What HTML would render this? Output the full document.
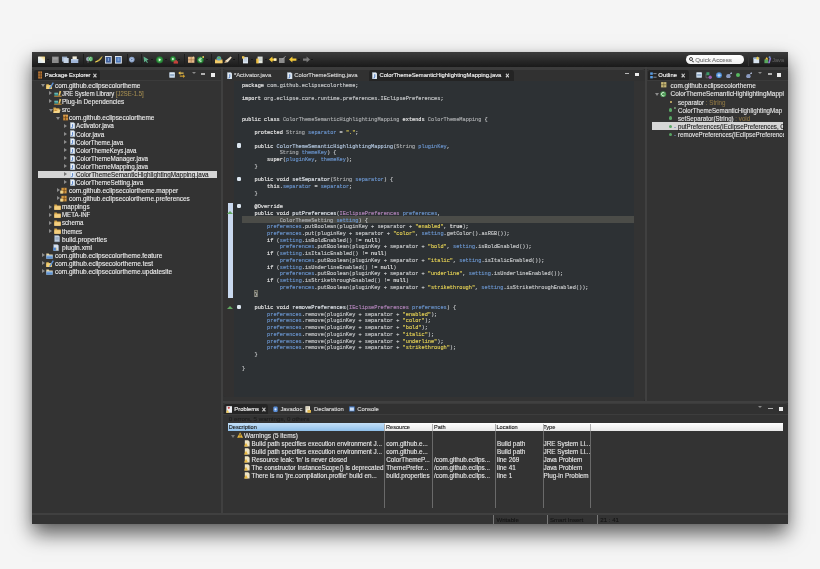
<!DOCTYPE html><html><head><meta charset="utf-8"><style>
*{margin:0;padding:0;box-sizing:border-box}
html,body{width:820px;height:569px;overflow:hidden;background:#f5f5f5}
body{position:relative;font-family:"Liberation Sans",sans-serif}
.a{position:absolute}
.t{position:absolute;white-space:pre;line-height:1;-webkit-text-stroke:0.12px currentColor}
.m{font-family:"Liberation Mono",monospace}

.cd{position:absolute;white-space:pre;font-family:"Liberation Mono",monospace;line-height:1;color:#c6c8ca;-webkit-text-stroke:0.14px currentColor;transform:scaleY(1.15);transform-origin:0 75%}
.cd .k{color:#e4e4e4;-webkit-text-stroke:0.16px currentColor}
.cd .f{color:#6a94cc}
.cd .s{color:#e2cf55}
.cd .ty{color:#a9abad}
.cd .p{color:#b184b9}
.cd .mth{color:#dde2e8}
.cd .ctor{color:#b0c4dc}
.cd .ann{color:#e4e4e4;-webkit-text-stroke:0.16px currentColor}
</style></head><body><div id="root" class="a" style="left:0;top:0;width:820px;height:569px;filter:blur(0.5px)"><div class="a" style="left:32.40px;top:52.40px;width:755.6px;height:472px;background:#333333;box-shadow:0 10px 19px rgba(0,0,0,0.62),0 0 5px rgba(0,0,0,0.1)"></div>
<div class="a" style="left:32.40px;top:52.40px;width:755.6px;height:14.2px;background:linear-gradient(#3b3b3b,#1a1a1a)"></div>
<div class="a" style="left:32.40px;top:66.60px;width:755.6px;height:2.4px;background:#3c3c3c"></div>
<div class="a" style="left:220.50px;top:69.00px;width:0.6px;height:444px;background:#2c2c2c"></div>
<div class="a" style="left:221.10px;top:66.60px;width:2.2px;height:447px;background:#404040"></div>
<div class="a" style="left:644.00px;top:69.00px;width:0.8px;height:332px;background:#2c2c2c"></div>
<div class="a" style="left:644.80px;top:66.60px;width:2.3px;height:335px;background:#404040"></div>
<div class="a" style="left:223.30px;top:400.50px;width:564.7px;height:0.8px;background:#2c2c2c"></div>
<div class="a" style="left:223.30px;top:401.30px;width:564.7px;height:1.9px;background:#404040"></div>
<div class="a" style="left:32.40px;top:512.90px;width:755.6px;height:1.9px;background:#404040"></div>
<div class="a" style="left:32.40px;top:69.00px;width:188.7px;height:443.9px;background:#333333;border-radius:3px 3px 3px 0"></div>
<div class="a" style="left:32.40px;top:69.00px;width:188.7px;height:11px;background:#313131;border-radius:3px 3px 0 0;border-top:0.8px solid #3c3c3c"></div>
<div class="a" style="left:32.40px;top:80.00px;width:188.7px;height:0.8px;background:#3b3b3b"></div>
<div class="a" style="left:34.00px;top:70.30px;width:66px;height:10px;background:#242424;border-radius:3px 3px 0 0"></div>
<div class="t" style="left:44.80px;top:72.70px;font-size:5.8px;color:#f2f2f2;-webkit-text-stroke:0.14px currentColor">Package Explorer</div>
<div class="t" style="left:93.00px;top:72.85px;font-size:6.5px;color:#e0e0e0;font-weight:bold">×</div>
<div class="a" style="left:223.30px;top:69.00px;width:421.5px;height:331.5px;background:#333333;border-radius:3px"></div>
<div class="a" style="left:223.30px;top:69.00px;width:421.5px;height:11.5px;background:#313131;border-radius:3px 3px 0 0;border-top:0.8px solid #3c3c3c"></div>
<div class="a" style="left:369.00px;top:70.00px;width:144.5px;height:10.5px;background:#242424;border-radius:3px 3px 0 0"></div>
<div class="t" style="left:233.90px;top:72.65px;font-size:5.9px;color:#d8d8d8;-webkit-text-stroke:0.14px currentColor">*Activator.java</div>
<div class="t" style="left:294.30px;top:72.65px;font-size:5.9px;color:#d8d8d8;-webkit-text-stroke:0.14px currentColor">ColorThemeSetting.java</div>
<div class="t" style="left:379.50px;top:72.67px;font-size:5.85px;color:#f2f2f2;-webkit-text-stroke:0.14px currentColor">ColorThemeSemanticHighlightingMapping.java</div>
<div class="t" style="left:505.40px;top:72.85px;font-size:6.5px;color:#e0e0e0;font-weight:bold">×</div>
<div class="a" style="left:223.30px;top:80.50px;width:410.7px;height:316.5px;background:#2d3134;border-radius:0 0 0 3px"></div>
<div class="a" style="left:223.30px;top:80.50px;width:10.6px;height:316.5px;background:#323131;border-radius:0 0 0 3px"></div>
<div class="a" style="left:647.10px;top:69.00px;width:140.5px;height:331.5px;background:#333333;border-radius:3px"></div>
<div class="a" style="left:647.10px;top:69.00px;width:140.5px;height:11.5px;background:#313131;border-radius:3px 3px 0 0;border-top:0.8px solid #3c3c3c"></div>
<div class="a" style="left:648.20px;top:70.30px;width:40.5px;height:10.2px;background:#242424;border-radius:3px 3px 0 0"></div>
<div class="a" style="left:647.10px;top:80.30px;width:140.5px;height:0.8px;background:#3b3b3b"></div>
<div class="t" style="left:658.30px;top:72.65px;font-size:5.9px;color:#f2f2f2;-webkit-text-stroke:0.14px currentColor">Outline</div>
<div class="t" style="left:681.20px;top:72.85px;font-size:6.5px;color:#e0e0e0;font-weight:bold">×</div>
<div class="a" style="left:223.30px;top:403.20px;width:564.3px;height:109.7px;background:#333333;border-radius:3px"></div>
<div class="a" style="left:223.30px;top:403.20px;width:564.3px;height:11px;background:#313131;border-radius:3px 3px 0 0;border-top:0.8px solid #3c3c3c"></div>
<div class="a" style="left:224.40px;top:404.20px;width:43.5px;height:9.6px;background:#242424;border-radius:3px 3px 0 0"></div>
<div class="a" style="left:223.30px;top:413.90px;width:564.3px;height:0.8px;background:#3d3d3d"></div>
<div class="t" style="left:234.30px;top:407.27px;font-size:5.85px;color:#f2f2f2;-webkit-text-stroke:0.14px currentColor">Problems</div>
<div class="t" style="left:262.00px;top:406.65px;font-size:6.5px;color:#e0e0e0;font-weight:bold">×</div>
<div class="t" style="left:280.40px;top:407.25px;font-size:5.9px;color:#d8d8d8;-webkit-text-stroke:0.14px currentColor">Javadoc</div>
<div class="t" style="left:314.00px;top:407.25px;font-size:5.9px;color:#d8d8d8;-webkit-text-stroke:0.14px currentColor">Declaration</div>
<div class="t" style="left:357.20px;top:407.25px;font-size:5.9px;color:#d8d8d8;-webkit-text-stroke:0.14px currentColor">Console</div>
<div class="a" style="left:32.40px;top:514.80px;width:755.6px;height:9.6px;background:#333333"></div>
<div class="a" style="left:41.40px;top:84.30px;width:0;height:0;border-left:2.2px solid transparent;border-right:2.2px solid transparent;border-top:3px solid #8c8c8c"></div>
<svg class="a" style="left:46.00px;top:81.90px" width="8" height="7.4" viewBox="0 0 8 7.4"><path d="M0.3 2.2h2.2l0.6 0.7h2.6v4.3H0.3z" fill="#e2b855"/><path d="M0.3 3.4h5.4v3.8H0.3z" fill="#f0cf78"/><path d="M3.6 6.6L7.3 0.6" stroke="#5e93d8" stroke-width="1.3"/></svg>
<div class="t" style="left:54.60px;top:83.08px;font-size:6.45px;color:#ececec;transform:scaleX(1.0027);transform-origin:0 0;">com.github.eclipsecolortheme</div>
<div class="a" style="left:49.40px;top:91.38px;width:0;height:0;border-top:2.2px solid transparent;border-bottom:2.2px solid transparent;border-left:3px solid #8c8c8c"></div>
<svg class="a" style="left:53.70px;top:89.98px" width="8" height="7.4" viewBox="0 0 8 7.4"><path d="M0.2 6.8h7.4v-1.2H0.2z" fill="#b88a3a"/><path d="M0.4 2.8h3.6v2.8H0.4z" fill="#3f9a9a"/><path d="M0.4 2.8h3.6v0.9H0.4z" fill="#7cc0b8"/><path d="M4.3 5.6L5.6 0.8l1.6 0.4L6 5.6z" fill="#e8c060"/></svg>
<div class="t" style="left:61.80px;top:91.16px;font-size:6.45px;color:#ececec;transform:scaleX(0.9194);transform-origin:0 0;">JRE System Library<span style="color:#a08a50"> [J2SE-1.5]</span></div>
<div class="a" style="left:49.40px;top:99.46px;width:0;height:0;border-top:2.2px solid transparent;border-bottom:2.2px solid transparent;border-left:3px solid #8c8c8c"></div>
<svg class="a" style="left:53.70px;top:98.06px" width="8" height="7.4" viewBox="0 0 8 7.4"><path d="M0.2 6.8h7.4v-1.2H0.2z" fill="#b88a3a"/><path d="M0.4 2.8h3.6v2.8H0.4z" fill="#3f9a9a"/><path d="M0.4 2.8h3.6v0.9H0.4z" fill="#7cc0b8"/><path d="M4.3 5.6L5.6 0.8l1.6 0.4L6 5.6z" fill="#e8c060"/></svg>
<div class="t" style="left:61.80px;top:99.23px;font-size:6.45px;color:#ececec;transform:scaleX(0.9857);transform-origin:0 0;">Plug-in Dependencies</div>
<div class="a" style="left:48.60px;top:108.54px;width:0;height:0;border-left:2.2px solid transparent;border-right:2.2px solid transparent;border-top:3px solid #8c8c8c"></div>
<svg class="a" style="left:53.40px;top:106.14px" width="8" height="7.4" viewBox="0 0 8 7.4"><path d="M0.4 1.6h2.2l0.6 0.7h3.2v4.6H0.4z" fill="#d9a84a"/><path d="M1.4 3.4h6.2l-1.2 3.5H0.4z" fill="#f5d68a"/><path d="M0.6 5.2l2-1.6 2.2 1z" fill="#c8862a"/></svg>
<div class="t" style="left:61.80px;top:107.31px;font-size:6.45px;color:#ececec;transform:scaleX(0.9309);transform-origin:0 0;">src</div>
<div class="a" style="left:55.80px;top:116.62px;width:0;height:0;border-left:2.2px solid transparent;border-right:2.2px solid transparent;border-top:3px solid #8c8c8c"></div>
<svg class="a" style="left:62.50px;top:114.22px" width="8" height="7.4" viewBox="0 0 8 7.4"><path d="M0.2 0.8h4.8v5.6H0.2z" fill="#c98a3a"/><path d="M0.2 3.4h4.8v0.7H0.2zM2.3 0.8h0.7v5.6H2.3z" fill="#6a4518"/><path d="M0.2 0.8h4.8v0.8H0.2z" fill="#e8b060"/></svg>
<div class="t" style="left:69.00px;top:115.40px;font-size:6.45px;color:#ececec;transform:scaleX(1.0027);transform-origin:0 0;">com.github.eclipsecolortheme</div>
<div class="a" style="left:63.80px;top:123.70px;width:0;height:0;border-top:2.2px solid transparent;border-bottom:2.2px solid transparent;border-left:3px solid #8c8c8c"></div>
<svg class="a" style="left:69.50px;top:122.30px" width="8" height="7.4" viewBox="0 0 8 7.4"><path d="M0.3 0.4h3.4l1.2 1.2v5.2H0.3z" fill="#e6eef6" stroke="#9fb2c6" stroke-width="0.4"/><path d="M2.6 2.2v2.6q0 1-1.2 0.9" stroke="#3a6cc0" stroke-width="0.9" fill="none"/></svg>
<div class="t" style="left:76.20px;top:123.47px;font-size:6.45px;color:#ececec;transform:scaleX(0.9896);transform-origin:0 0;">Activator.java</div>
<div class="a" style="left:63.80px;top:131.78px;width:0;height:0;border-top:2.2px solid transparent;border-bottom:2.2px solid transparent;border-left:3px solid #8c8c8c"></div>
<svg class="a" style="left:69.50px;top:130.38px" width="8" height="7.4" viewBox="0 0 8 7.4"><path d="M0.3 0.4h3.4l1.2 1.2v5.2H0.3z" fill="#e6eef6" stroke="#9fb2c6" stroke-width="0.4"/><path d="M2.6 2.2v2.6q0 1-1.2 0.9" stroke="#3a6cc0" stroke-width="0.9" fill="none"/></svg>
<div class="t" style="left:76.20px;top:131.56px;font-size:6.45px;color:#ececec;transform:scaleX(0.9846);transform-origin:0 0;">Color.java</div>
<div class="a" style="left:63.80px;top:139.86px;width:0;height:0;border-top:2.2px solid transparent;border-bottom:2.2px solid transparent;border-left:3px solid #8c8c8c"></div>
<svg class="a" style="left:69.50px;top:138.46px" width="8" height="7.4" viewBox="0 0 8 7.4"><path d="M0.3 0.4h3.4l1.2 1.2v5.2H0.3z" fill="#e6eef6" stroke="#9fb2c6" stroke-width="0.4"/><path d="M2.6 2.2v2.6q0 1-1.2 0.9" stroke="#3a6cc0" stroke-width="0.9" fill="none"/></svg>
<div class="t" style="left:76.20px;top:139.64px;font-size:6.45px;color:#ececec;transform:scaleX(0.9627);transform-origin:0 0;">ColorTheme.java</div>
<div class="a" style="left:63.80px;top:147.94px;width:0;height:0;border-top:2.2px solid transparent;border-bottom:2.2px solid transparent;border-left:3px solid #8c8c8c"></div>
<svg class="a" style="left:69.50px;top:146.54px" width="8" height="7.4" viewBox="0 0 8 7.4"><path d="M0.3 0.4h3.4l1.2 1.2v5.2H0.3z" fill="#e6eef6" stroke="#9fb2c6" stroke-width="0.4"/><path d="M2.6 2.2v2.6q0 1-1.2 0.9" stroke="#3a6cc0" stroke-width="0.9" fill="none"/></svg>
<div class="t" style="left:76.20px;top:147.72px;font-size:6.45px;color:#ececec;transform:scaleX(0.9535);transform-origin:0 0;">ColorThemeKeys.java</div>
<div class="a" style="left:63.80px;top:156.02px;width:0;height:0;border-top:2.2px solid transparent;border-bottom:2.2px solid transparent;border-left:3px solid #8c8c8c"></div>
<svg class="a" style="left:69.50px;top:154.62px" width="8" height="7.4" viewBox="0 0 8 7.4"><path d="M0.3 0.4h3.4l1.2 1.2v5.2H0.3z" fill="#e6eef6" stroke="#9fb2c6" stroke-width="0.4"/><path d="M2.6 2.2v2.6q0 1-1.2 0.9" stroke="#3a6cc0" stroke-width="0.9" fill="none"/></svg>
<div class="t" style="left:76.20px;top:155.79px;font-size:6.45px;color:#ececec;transform:scaleX(0.9733);transform-origin:0 0;">ColorThemeManager.java</div>
<div class="a" style="left:63.80px;top:164.10px;width:0;height:0;border-top:2.2px solid transparent;border-bottom:2.2px solid transparent;border-left:3px solid #8c8c8c"></div>
<svg class="a" style="left:69.50px;top:162.70px" width="8" height="7.4" viewBox="0 0 8 7.4"><path d="M0.3 0.4h3.4l1.2 1.2v5.2H0.3z" fill="#e6eef6" stroke="#9fb2c6" stroke-width="0.4"/><path d="M2.6 2.2v2.6q0 1-1.2 0.9" stroke="#3a6cc0" stroke-width="0.9" fill="none"/></svg>
<div class="t" style="left:76.20px;top:163.88px;font-size:6.45px;color:#ececec;transform:scaleX(0.9780);transform-origin:0 0;">ColorThemeMapping.java</div>
<div class="a" style="left:37.70px;top:170.78px;width:179.2px;height:7.7px;background:#d6d6d6"></div>
<div class="a" style="left:63.80px;top:172.18px;width:0;height:0;border-top:2.2px solid transparent;border-bottom:2.2px solid transparent;border-left:3px solid #777"></div>
<svg class="a" style="left:69.50px;top:170.78px" width="8" height="7.4" viewBox="0 0 8 7.4"><path d="M0.3 0.4h3.4l1.2 1.2v5.2H0.3z" fill="#e6eef6" stroke="#9fb2c6" stroke-width="0.4"/><path d="M2.6 2.2v2.6q0 1-1.2 0.9" stroke="#3a6cc0" stroke-width="0.9" fill="none"/></svg>
<div class="t" style="left:76.20px;top:171.96px;font-size:6.45px;color:#1a1a1a;transform:scaleX(0.9882);transform-origin:0 0;">ColorThemeSemanticHighlightingMapping.java</div>
<div class="a" style="left:63.80px;top:180.26px;width:0;height:0;border-top:2.2px solid transparent;border-bottom:2.2px solid transparent;border-left:3px solid #8c8c8c"></div>
<svg class="a" style="left:69.50px;top:178.86px" width="8" height="7.4" viewBox="0 0 8 7.4"><path d="M0.3 0.4h3.4l1.2 1.2v5.2H0.3z" fill="#e6eef6" stroke="#9fb2c6" stroke-width="0.4"/><path d="M2.6 2.2v2.6q0 1-1.2 0.9" stroke="#3a6cc0" stroke-width="0.9" fill="none"/></svg>
<div class="t" style="left:76.20px;top:180.03px;font-size:6.45px;color:#ececec;transform:scaleX(0.9730);transform-origin:0 0;">ColorThemeSetting.java</div>
<div class="a" style="left:56.60px;top:188.34px;width:0;height:0;border-top:2.2px solid transparent;border-bottom:2.2px solid transparent;border-left:3px solid #8c8c8c"></div>
<svg class="a" style="left:60.40px;top:186.94px" width="8" height="7.4" viewBox="0 0 8 7.4"><path d="M1.4 0.8h5.2v5.6H1.4z" fill="#d59a45"/><path d="M1.4 3.4h5.2v0.7H1.4zM3.8 0.8h0.7v5.6H3.8z" fill="#6a4518"/><path d="M0.2 3.6h2.6v3H0.2z" fill="#f0d890"/></svg>
<div class="t" style="left:69.00px;top:188.12px;font-size:6.45px;color:#ececec;transform:scaleX(1.0038);transform-origin:0 0;">com.github.eclipsecolortheme.mapper</div>
<div class="a" style="left:56.60px;top:196.42px;width:0;height:0;border-top:2.2px solid transparent;border-bottom:2.2px solid transparent;border-left:3px solid #8c8c8c"></div>
<svg class="a" style="left:60.40px;top:195.02px" width="8" height="7.4" viewBox="0 0 8 7.4"><path d="M1.4 0.8h5.2v5.6H1.4z" fill="#d59a45"/><path d="M1.4 3.4h5.2v0.7H1.4zM3.8 0.8h0.7v5.6H3.8z" fill="#6a4518"/><path d="M0.2 3.6h2.6v3H0.2z" fill="#f0d890"/></svg>
<div class="t" style="left:69.00px;top:196.20px;font-size:6.45px;color:#ececec;transform:scaleX(0.9987);transform-origin:0 0;">com.github.eclipsecolortheme.preferences</div>
<div class="a" style="left:49.40px;top:204.50px;width:0;height:0;border-top:2.2px solid transparent;border-bottom:2.2px solid transparent;border-left:3px solid #8c8c8c"></div>
<svg class="a" style="left:54.00px;top:203.10px" width="8" height="7.4" viewBox="0 0 8 7.4"><path d="M0.3 1.6h2.4l0.6 0.8h3.4v4.4H0.3z" fill="#d9a84a"/><path d="M0.3 3.2h6.4v3.6H0.3z" fill="#f3cf80"/></svg>
<div class="t" style="left:61.80px;top:204.28px;font-size:6.45px;color:#ececec;transform:scaleX(0.9885);transform-origin:0 0;">mappings</div>
<div class="a" style="left:49.40px;top:212.58px;width:0;height:0;border-top:2.2px solid transparent;border-bottom:2.2px solid transparent;border-left:3px solid #8c8c8c"></div>
<svg class="a" style="left:54.00px;top:211.18px" width="8" height="7.4" viewBox="0 0 8 7.4"><path d="M0.3 1.6h2.4l0.6 0.8h3.4v4.4H0.3z" fill="#d9a84a"/><path d="M0.3 3.2h6.4v3.6H0.3z" fill="#f3cf80"/></svg>
<div class="t" style="left:61.80px;top:212.35px;font-size:6.45px;color:#ececec;transform:scaleX(0.9458);transform-origin:0 0;">META-INF</div>
<div class="a" style="left:49.40px;top:220.66px;width:0;height:0;border-top:2.2px solid transparent;border-bottom:2.2px solid transparent;border-left:3px solid #8c8c8c"></div>
<svg class="a" style="left:54.00px;top:219.26px" width="8" height="7.4" viewBox="0 0 8 7.4"><path d="M0.3 1.6h2.4l0.6 0.8h3.4v4.4H0.3z" fill="#d9a84a"/><path d="M0.3 3.2h6.4v3.6H0.3z" fill="#f3cf80"/></svg>
<div class="t" style="left:61.80px;top:220.44px;font-size:6.45px;color:#ececec;transform:scaleX(0.9491);transform-origin:0 0;">schema</div>
<div class="a" style="left:49.40px;top:228.74px;width:0;height:0;border-top:2.2px solid transparent;border-bottom:2.2px solid transparent;border-left:3px solid #8c8c8c"></div>
<svg class="a" style="left:54.00px;top:227.34px" width="8" height="7.4" viewBox="0 0 8 7.4"><path d="M0.3 1.6h2.4l0.6 0.8h3.4v4.4H0.3z" fill="#d9a84a"/><path d="M0.3 3.2h6.4v3.6H0.3z" fill="#f3cf80"/></svg>
<div class="t" style="left:61.80px;top:228.52px;font-size:6.45px;color:#ececec;transform:scaleX(0.9562);transform-origin:0 0;">themes</div>
<svg class="a" style="left:53.60px;top:235.42px" width="8" height="7.4" viewBox="0 0 8 7.4"><path d="M0.6 0.4h3.8l1.2 1.2v5.2H0.6z" fill="#c9d6e6" stroke="#8ea4bc" stroke-width="0.4"/><path d="M1.4 2.4h3.4M1.4 3.6h3.4M1.4 4.8h3.4" stroke="#6a84a4" stroke-width="0.5"/></svg>
<div class="t" style="left:61.80px;top:236.59px;font-size:6.45px;color:#ececec;transform:scaleX(1.0220);transform-origin:0 0;">build.properties</div>
<svg class="a" style="left:53.40px;top:243.50px" width="8" height="7.4" viewBox="0 0 8 7.4"><path d="M0.6 0.4h3.8l1.2 1.2v5.2H0.6z" fill="#d6e0ec" stroke="#8ea4bc" stroke-width="0.4"/><path d="M0.2 3.6h3v3H0.2z" fill="#4f86d0"/><path d="M2.8 4.4h1.4M2.8 5.6h1.4" stroke="#f0c050" stroke-width="0.5"/></svg>
<div class="t" style="left:61.80px;top:244.67px;font-size:6.45px;color:#ececec;transform:scaleX(1.0350);transform-origin:0 0;">plugin.xml</div>
<div class="a" style="left:42.20px;top:252.98px;width:0;height:0;border-top:2.2px solid transparent;border-bottom:2.2px solid transparent;border-left:3px solid #8c8c8c"></div>
<svg class="a" style="left:46.30px;top:251.58px" width="8" height="7.4" viewBox="0 0 8 7.4"><path d="M0.3 1.6h2.4l0.6 0.8h3.4v4.4H0.3z" fill="#e8d8a8"/><path d="M0.3 3.6h6.4v3.2H0.3z" fill="#5b8fd0"/><path d="M0.3 3.6h6.4v0.8H0.3z" fill="#a8c8f0"/></svg>
<div class="t" style="left:54.60px;top:252.76px;font-size:6.45px;color:#ececec;transform:scaleX(1.0037);transform-origin:0 0;">com.github.eclipsecolortheme.feature</div>
<div class="a" style="left:42.20px;top:261.06px;width:0;height:0;border-top:2.2px solid transparent;border-bottom:2.2px solid transparent;border-left:3px solid #8c8c8c"></div>
<svg class="a" style="left:46.00px;top:259.66px" width="8" height="7.4" viewBox="0 0 8 7.4"><path d="M0.3 2.2h2.2l0.6 0.7h2.6v4.3H0.3z" fill="#e2b855"/><path d="M0.3 3.4h5.4v3.8H0.3z" fill="#f0cf78"/><path d="M3.6 6.6L7.3 0.6" stroke="#5e93d8" stroke-width="1.3"/></svg>
<div class="t" style="left:54.60px;top:260.83px;font-size:6.45px;color:#ececec;transform:scaleX(1.0079);transform-origin:0 0;">com.github.eclipsecolortheme.test</div>
<div class="a" style="left:42.20px;top:269.14px;width:0;height:0;border-top:2.2px solid transparent;border-bottom:2.2px solid transparent;border-left:3px solid #8c8c8c"></div>
<svg class="a" style="left:46.30px;top:267.74px" width="8" height="7.4" viewBox="0 0 8 7.4"><path d="M0.3 1.6h2.4l0.6 0.8h3.4v4.4H0.3z" fill="#e8d8a8"/><path d="M0.3 3.6h6.4v3.2H0.3z" fill="#5b8fd0"/><path d="M0.3 3.6h6.4v0.8H0.3z" fill="#a8c8f0"/></svg>
<div class="t" style="left:54.60px;top:268.91px;font-size:6.45px;color:#ececec;transform:scaleX(1.0037);transform-origin:0 0;">com.github.eclipsecolortheme.updatesite</div>
<div class="a" style="left:242.00px;top:216.16px;width:392px;height:6.726px;background:#4b4c48"></div>
<div class="a" style="left:254.24px;top:290.11px;width:3.7600000000000002px;height:6.8px;background:#46473f;border:0.5px solid #77776c"></div>
<div class="cd" style="left:241.9px;top:84.00px;font-size:5.267px"><span class="k">package</span> com.github.eclipsecolortheme;</div>
<div class="cd" style="left:241.9px;top:97.46px;font-size:5.267px"><span class="k">import</span> org.eclipse.core.runtime.preferences.IEclipsePreferences;</div>
<div class="cd" style="left:241.9px;top:117.63px;font-size:5.267px"><span class="k">public</span> <span class="k">class</span> <span class="ty">ColorThemeSemanticHighlightingMapping</span> <span class="k">extends</span> <span class="ty">ColorThemeMapping</span> {</div>
<div class="cd" style="left:241.9px;top:131.09px;font-size:5.267px">    <span class="k">protected</span> <span class="ty">String</span> <span class="f">separator</span> = <span class="s">&quot;.&quot;</span>;</div>
<div class="cd" style="left:241.9px;top:144.54px;font-size:5.267px">    <span class="k">public</span> <span class="ctor">ColorThemeSemanticHighlightingMapping</span>(<span class="ty">String</span> <span class="f">pluginKey</span>,</div>
<div class="cd" style="left:241.9px;top:151.26px;font-size:5.267px">            <span class="ty">String</span> <span class="f">themeKey</span>) {</div>
<div class="cd" style="left:241.9px;top:157.99px;font-size:5.267px">        <span class="k">super</span>(<span class="f">pluginKey</span>, <span class="f">themeKey</span>);</div>
<div class="cd" style="left:241.9px;top:164.72px;font-size:5.267px">    }</div>
<div class="cd" style="left:241.9px;top:178.17px;font-size:5.267px">    <span class="k">public</span> <span class="k">void</span> <span class="mth">setSeparator</span>(<span class="ty">String</span> <span class="f">separator</span>) {</div>
<div class="cd" style="left:241.9px;top:184.89px;font-size:5.267px">        <span class="k">this</span>.<span class="f">separator</span> = <span class="f">separator</span>;</div>
<div class="cd" style="left:241.9px;top:191.62px;font-size:5.267px">    }</div>
<div class="cd" style="left:241.9px;top:205.07px;font-size:5.267px">    <span class="ann">@Override</span></div>
<div class="cd" style="left:241.9px;top:211.80px;font-size:5.267px">    <span class="k">public</span> <span class="k">void</span> <span class="mth">putPreferences</span>(<span class="p">IEclipsePreferences</span> <span class="f">preferences</span>,</div>
<div class="cd" style="left:241.9px;top:218.52px;font-size:5.267px">            <span class="ty">ColorThemeSetting</span> <span class="f">setting</span>) {</div>
<div class="cd" style="left:241.9px;top:225.25px;font-size:5.267px">        <span class="f">preferences</span>.putBoolean(pluginKey + separator + <span class="s">&quot;enabled&quot;</span>, <span class="k">true</span>);</div>
<div class="cd" style="left:241.9px;top:231.98px;font-size:5.267px">        <span class="f">preferences</span>.put(pluginKey + separator + <span class="s">&quot;color&quot;</span>, <span class="f">setting</span>.getColor().asRGB());</div>
<div class="cd" style="left:241.9px;top:238.70px;font-size:5.267px">        <span class="k">if</span> (<span class="f">setting</span>.isBoldEnabled() != <span class="k">null</span>)</div>
<div class="cd" style="left:241.9px;top:245.43px;font-size:5.267px">            <span class="f">preferences</span>.putBoolean(pluginKey + separator + <span class="s">&quot;bold&quot;</span>, <span class="f">setting</span>.isBoldEnabled());</div>
<div class="cd" style="left:241.9px;top:252.15px;font-size:5.267px">        <span class="k">if</span> (<span class="f">setting</span>.isItalicEnabled() != <span class="k">null</span>)</div>
<div class="cd" style="left:241.9px;top:258.88px;font-size:5.267px">            <span class="f">preferences</span>.putBoolean(pluginKey + separator + <span class="s">&quot;italic&quot;</span>, <span class="f">setting</span>.isItalicEnabled());</div>
<div class="cd" style="left:241.9px;top:265.61px;font-size:5.267px">        <span class="k">if</span> (<span class="f">setting</span>.isUnderlineEnabled() != <span class="k">null</span>)</div>
<div class="cd" style="left:241.9px;top:272.33px;font-size:5.267px">            <span class="f">preferences</span>.putBoolean(pluginKey + separator + <span class="s">&quot;underline&quot;</span>, <span class="f">setting</span>.isUnderlineEnabled());</div>
<div class="cd" style="left:241.9px;top:279.06px;font-size:5.267px">        <span class="k">if</span> (<span class="f">setting</span>.isStrikethroughEnabled() != <span class="k">null</span>)</div>
<div class="cd" style="left:241.9px;top:285.78px;font-size:5.267px">            <span class="f">preferences</span>.putBoolean(pluginKey + separator + <span class="s">&quot;strikethrough&quot;</span>, <span class="f">setting</span>.isStrikethroughEnabled());</div>
<div class="cd" style="left:241.9px;top:292.51px;font-size:5.267px">    }</div>
<div class="cd" style="left:241.9px;top:305.96px;font-size:5.267px">    <span class="k">public</span> <span class="k">void</span> <span class="mth">removePreferences</span>(<span class="p">IEclipsePreferences</span> <span class="f">preferences</span>) {</div>
<div class="cd" style="left:241.9px;top:312.69px;font-size:5.267px">        <span class="f">preferences</span>.remove(pluginKey + separator + <span class="s">&quot;enabled&quot;</span>);</div>
<div class="cd" style="left:241.9px;top:319.41px;font-size:5.267px">        <span class="f">preferences</span>.remove(pluginKey + separator + <span class="s">&quot;color&quot;</span>);</div>
<div class="cd" style="left:241.9px;top:326.14px;font-size:5.267px">        <span class="f">preferences</span>.remove(pluginKey + separator + <span class="s">&quot;bold&quot;</span>);</div>
<div class="cd" style="left:241.9px;top:332.87px;font-size:5.267px">        <span class="f">preferences</span>.remove(pluginKey + separator + <span class="s">&quot;italic&quot;</span>);</div>
<div class="cd" style="left:241.9px;top:339.59px;font-size:5.267px">        <span class="f">preferences</span>.remove(pluginKey + separator + <span class="s">&quot;underline&quot;</span>);</div>
<div class="cd" style="left:241.9px;top:346.32px;font-size:5.267px">        <span class="f">preferences</span>.remove(pluginKey + separator + <span class="s">&quot;strikethrough&quot;</span>);</div>
<div class="cd" style="left:241.9px;top:353.04px;font-size:5.267px">    }</div>
<div class="cd" style="left:241.9px;top:366.50px;font-size:5.267px">}</div>
<div class="a" style="left:227.50px;top:202.50px;width:5.5px;height:95px;background:#c9d9ef"></div>
<div class="a" style="left:236.50px;top:143.33px;width:4.5px;height:4.5px;background:#dce6f0;border-radius:1.2px"></div>
<div class="a" style="left:236.50px;top:176.96px;width:4.5px;height:4.5px;background:#dce6f0;border-radius:1.2px"></div>
<div class="a" style="left:236.50px;top:203.87px;width:4.5px;height:4.5px;background:#dce6f0;border-radius:1.2px"></div>
<div class="a" style="left:236.50px;top:304.76px;width:4.5px;height:4.5px;background:#dce6f0;border-radius:1.2px"></div>
<div class="a" style="left:226.9px;top:211.1px;width:0;height:0;border-left:3.2px solid transparent;border-right:3.2px solid transparent;border-bottom:3.7px solid #62a862"></div>
<div class="a" style="left:226.9px;top:305.5px;width:0;height:0;border-left:3.2px solid transparent;border-right:3.2px solid transparent;border-bottom:3.7px solid #62a862"></div>
<div class="a" style="left:648px;top:80.5px;width:135.5px;height:320px;overflow:hidden">
<svg class="a" style="left:13.20px;top:1.90px" width="5.6" height="5.6" viewBox="0 0 5.6 5.6"><rect x="0.1" y="0.1" width="5.3" height="5.3" fill="#c8b878"/><path d="M0.1 2.75h5.3M2.75 0.1v5.3" stroke="#5e5430" stroke-width="0.6"/></svg>
<div class="t" style="left:22.60px;top:2.88px;font-size:6.45px;color:#e6e6e6;">com.github.eclipsecolortheme</div>
<div class="a" style="left:7.10px;top:12.18px;width:0;height:0;border-left:2.2px solid transparent;border-right:2.2px solid transparent;border-top:3px solid #8c8c8c"></div>
<svg class="a" style="left:12.30px;top:10.08px" width="6.4" height="6.4" viewBox="0 0 6.4 6.4"><circle cx="3.2" cy="3.2" r="3" fill="#4a9a52"/><path d="M4.4 2a1.7 1.7 0 1 0 0 2.4" stroke="#eaf6ea" stroke-width="0.9" fill="none"/></svg>
<div class="t" style="left:22.60px;top:10.95px;font-size:6.45px;color:#e6e6e6;">ColorThemeSemanticHighlightingMappi</div>
<div class="a" style="left:22.00px;top:20.36px;width:2.2px;height:2.2px;background:#dcc070;border-radius:50%"></div>
<div class="t" style="left:30.200000000000045px;top:19.03px;font-size:6.45px;color:#e6e6e6;transform:scaleX(0.96);transform-origin:0 0">separator<span style="color:#8a7444"> : String</span></div>
<div class="a" style="left:21.15px;top:27.89px;width:3.3px;height:3.3px;background:#5aa866;border-radius:50%"></div>
<div class="t" style="left:26.00px;top:26.59px;font-size:3.5px;color:#9fd89f;">c</div>
<div class="t" style="left:30.20px;top:27.12px;font-size:6.45px;color:#e6e6e6;transform:scaleX(0.96);transform-origin:0 0">ColorThemeSemanticHighlightingMap</div>
<div class="a" style="left:21.15px;top:35.97px;width:3.3px;height:3.3px;background:#5aa866;border-radius:50%"></div>
<div class="t" style="left:30.200000000000045px;top:35.19px;font-size:6.45px;color:#e6e6e6;transform:scaleX(0.96);transform-origin:0 0">setSeparator(String)<span style="color:#8a7444"> : void</span></div>
<div class="a" style="left:3.70px;top:41.60px;width:131.6px;height:7.5px;background:#d6d6d6"></div>
<div class="a" style="left:21.15px;top:44.05px;width:3.3px;height:3.3px;background:#5aa866;border-radius:50%"></div>
<div class="a" style="left:26px;top:46.00px;width:0;height:0;border-left:1.2px solid transparent;border-right:1.2px solid transparent;border-bottom:1.8px solid #5a78b0"></div>
<div class="t" style="left:30.20px;top:43.28px;font-size:6.45px;color:#1a1a1a;transform:scaleX(0.96);transform-origin:0 0">putPreferences(IEclipsePreferences, C</div>
<div class="a" style="left:21.15px;top:52.13px;width:3.3px;height:3.3px;background:#5aa866;border-radius:50%"></div>
<div class="a" style="left:26px;top:54.08px;width:0;height:0;border-left:1.2px solid transparent;border-right:1.2px solid transparent;border-bottom:1.8px solid #7a90c0"></div>
<div class="t" style="left:30.20px;top:51.35px;font-size:6.45px;color:#e6e6e6;transform:scaleX(0.96);transform-origin:0 0">removePreferences(IEclipsePreference</div>
</div>
<div class="t" style="left:228.80px;top:416.10px;font-size:6.2px;color:#1e1e1e;">0 errors, 5 warnings, 0 others</div>
<div class="a" style="left:227.70px;top:423.40px;width:157px;height:8px;background:linear-gradient(#c4e0f8,#8fc0ea)"></div>
<div class="a" style="left:384.70px;top:423.40px;width:398.5px;height:8px;background:linear-gradient(#ffffff,#e8e8e8)"></div>
<div class="t" style="left:228.80px;top:424.60px;font-size:5.6px;color:#1a1a1a;">Description</div>
<div class="t" style="left:386.00px;top:424.60px;font-size:5.6px;color:#1a1a1a;">Resource</div>
<div class="t" style="left:434.00px;top:424.60px;font-size:5.6px;color:#1a1a1a;">Path</div>
<div class="t" style="left:496.50px;top:424.60px;font-size:5.6px;color:#1a1a1a;">Location</div>
<div class="t" style="left:543.20px;top:424.60px;font-size:5.6px;color:#1a1a1a;">Type</div>
<div class="a" style="left:384.40px;top:431.40px;width:0.8px;height:77px;background:#6a6a6a"></div>
<div class="a" style="left:384.40px;top:423.80px;width:0.6px;height:7.4px;background:#b0b0b0"></div>
<div class="a" style="left:432.40px;top:431.40px;width:0.8px;height:77px;background:#6a6a6a"></div>
<div class="a" style="left:432.40px;top:423.80px;width:0.6px;height:7.4px;background:#b0b0b0"></div>
<div class="a" style="left:495.30px;top:431.40px;width:0.8px;height:77px;background:#6a6a6a"></div>
<div class="a" style="left:495.30px;top:423.80px;width:0.6px;height:7.4px;background:#b0b0b0"></div>
<div class="a" style="left:542.60px;top:431.40px;width:0.8px;height:77px;background:#6a6a6a"></div>
<div class="a" style="left:542.60px;top:423.80px;width:0.6px;height:7.4px;background:#b0b0b0"></div>
<div class="a" style="left:590.00px;top:431.40px;width:0.8px;height:77px;background:#6a6a6a"></div>
<div class="a" style="left:590.00px;top:423.80px;width:0.6px;height:7.4px;background:#b0b0b0"></div>
<div class="a" style="left:231.20px;top:435.20px;width:0;height:0;border-left:2.2px solid transparent;border-right:2.2px solid transparent;border-top:3px solid #777"></div>
<svg class="a" style="left:237.20px;top:432.00px" width="6.4" height="6.4" viewBox="0 0 6.4 6.4"><path d="M3.1 0.3L6.1 5.8H0.1z" fill="#e8b840"/><path d="M3.1 2v2.2M3.1 4.8v0.6" stroke="#3a2a10" stroke-width="0.7"/></svg>
<div class="t" style="left:244.10px;top:433.17px;font-size:6.45px;color:#e6e6e6;">Warnings (5 items)</div>
<svg class="a" style="left:244.30px;top:440.00px" width="6.4" height="6.8" viewBox="0 0 6.4 6.8"><path d="M0.8 0.3h3.4l1.4 1.4v4.8H0.8z" fill="#eee4c4"/><path d="M0 6.6L2 2.8L4 6.6z" fill="#e8b840"/></svg>
<div class="t" style="left:251.60px;top:441.22px;font-size:6.35px;color:#e6e6e6;">Build path specifies execution environment J...</div>
<div class="t" style="left:386.20px;top:441.22px;font-size:6.35px;color:#e6e6e6;">com.github.e...</div>
<div class="t" style="left:434.00px;top:441.22px;font-size:6.35px;color:#e6e6e6;"></div>
<div class="t" style="left:497.00px;top:441.22px;font-size:6.35px;color:#e6e6e6;">Build path</div>
<div class="t" style="left:543.50px;top:441.22px;font-size:6.35px;color:#e6e6e6;">JRE System Li...</div>
<svg class="a" style="left:244.30px;top:448.05px" width="6.4" height="6.8" viewBox="0 0 6.4 6.8"><path d="M0.8 0.3h3.4l1.4 1.4v4.8H0.8z" fill="#eee4c4"/><path d="M0 6.6L2 2.8L4 6.6z" fill="#e8b840"/></svg>
<div class="t" style="left:251.60px;top:449.27px;font-size:6.35px;color:#e6e6e6;">Build path specifies execution environment J...</div>
<div class="t" style="left:386.20px;top:449.27px;font-size:6.35px;color:#e6e6e6;">com.github.e...</div>
<div class="t" style="left:434.00px;top:449.27px;font-size:6.35px;color:#e6e6e6;"></div>
<div class="t" style="left:497.00px;top:449.27px;font-size:6.35px;color:#e6e6e6;">Build path</div>
<div class="t" style="left:543.50px;top:449.27px;font-size:6.35px;color:#e6e6e6;">JRE System Li...</div>
<svg class="a" style="left:244.30px;top:456.10px" width="6.4" height="6.8" viewBox="0 0 6.4 6.8"><path d="M0.8 0.3h3.4l1.4 1.4v4.8H0.8z" fill="#eee4c4"/><path d="M0 6.6L2 2.8L4 6.6z" fill="#e8b840"/></svg>
<div class="t" style="left:251.60px;top:457.32px;font-size:6.35px;color:#e6e6e6;">Resource leak: &#x27;in&#x27; is never closed</div>
<div class="t" style="left:386.20px;top:457.32px;font-size:6.35px;color:#e6e6e6;">ColorThemeP...</div>
<div class="t" style="left:434.00px;top:457.32px;font-size:6.35px;color:#e6e6e6;">/com.github.eclips...</div>
<div class="t" style="left:497.00px;top:457.32px;font-size:6.35px;color:#e6e6e6;">line 269</div>
<div class="t" style="left:543.50px;top:457.32px;font-size:6.35px;color:#e6e6e6;">Java Problem</div>
<svg class="a" style="left:244.30px;top:464.15px" width="6.4" height="6.8" viewBox="0 0 6.4 6.8"><path d="M0.8 0.3h3.4l1.4 1.4v4.8H0.8z" fill="#eee4c4"/><path d="M0 6.6L2 2.8L4 6.6z" fill="#e8b840"/></svg>
<div class="t" style="left:251.60px;top:465.37px;font-size:6.35px;color:#e6e6e6;">The constructor InstanceScope() is deprecated</div>
<div class="t" style="left:386.20px;top:465.37px;font-size:6.35px;color:#e6e6e6;">ThemePrefer...</div>
<div class="t" style="left:434.00px;top:465.37px;font-size:6.35px;color:#e6e6e6;">/com.github.eclips...</div>
<div class="t" style="left:497.00px;top:465.37px;font-size:6.35px;color:#e6e6e6;">line 41</div>
<div class="t" style="left:543.50px;top:465.37px;font-size:6.35px;color:#e6e6e6;">Java Problem</div>
<svg class="a" style="left:244.30px;top:472.20px" width="6.4" height="6.8" viewBox="0 0 6.4 6.8"><path d="M0.8 0.3h3.4l1.4 1.4v4.8H0.8z" fill="#eee4c4"/><path d="M0 6.6L2 2.8L4 6.6z" fill="#e8b840"/></svg>
<div class="t" style="left:251.60px;top:473.42px;font-size:6.35px;color:#e6e6e6;">There is no &#x27;jre.compilation.profile&#x27; build en...</div>
<div class="t" style="left:386.20px;top:473.42px;font-size:6.35px;color:#e6e6e6;">build.properties</div>
<div class="t" style="left:434.00px;top:473.42px;font-size:6.35px;color:#e6e6e6;">/com.github.eclips...</div>
<div class="t" style="left:497.00px;top:473.42px;font-size:6.35px;color:#e6e6e6;">line 1</div>
<div class="t" style="left:543.50px;top:473.42px;font-size:6.35px;color:#e6e6e6;">Plug-in Problem</div>
<div class="a" style="left:492.80px;top:514.50px;width:0.8px;height:9px;background:#777"></div>
<div class="a" style="left:546.80px;top:514.50px;width:0.8px;height:9px;background:#777"></div>
<div class="a" style="left:597.00px;top:514.50px;width:0.8px;height:9px;background:#777"></div>
<div class="t" style="left:496.60px;top:516.65px;font-size:6.1px;color:#161616;">Writable</div>
<div class="t" style="left:549.90px;top:516.65px;font-size:6.1px;color:#161616;">Smart Insert</div>
<div class="t" style="left:600.30px;top:516.65px;font-size:6.1px;color:#161616;">21 : 41</div>
<div class="a" style="left:82.50px;top:54.00px;width:0.6px;height:11px;background:#1e1e1e"></div>
<div class="a" style="left:126.60px;top:54.00px;width:0.6px;height:11px;background:#1e1e1e"></div>
<div class="a" style="left:140.90px;top:54.00px;width:0.6px;height:11px;background:#1e1e1e"></div>
<div class="a" style="left:184.00px;top:54.00px;width:0.6px;height:11px;background:#1e1e1e"></div>
<div class="a" style="left:211.40px;top:54.00px;width:0.6px;height:11px;background:#1e1e1e"></div>
<div class="a" style="left:238.20px;top:54.00px;width:0.6px;height:11px;background:#1e1e1e"></div>
<svg class="a" width="0" height="0" style="left:0;top:0"><defs><linearGradient id="gN" x1="0" y1="1" x2="1" y2="0"><stop offset="0" stop-color="#cfe0ee"/><stop offset="0.55" stop-color="#f4f4ea"/><stop offset="1" stop-color="#f0cc60"/></linearGradient><radialGradient id="gR"><stop offset="0" stop-color="#d8f5d8"/><stop offset="0.35" stop-color="#3fae4f"/><stop offset="1" stop-color="#1d6a2a"/></radialGradient></defs></svg>
<svg class="a" style="left:38.00px;top:56.20px" width="8" height="7.6" viewBox="0 0 8 7.6"><rect x="0" y="0.6" width="7" height="6.4" fill="url(#gN)" rx="0.5"/></svg>
<div class="a" style="left:46.699999999999996px;top:59.4px;width:0;height:0;border-left:1.2px solid transparent;border-right:1.2px solid transparent;border-top:1.6px solid #050505"></div>
<svg class="a" style="left:51.80px;top:56.20px" width="8" height="7.6" viewBox="0 0 8 7.6"><rect x="0" y="0.6" width="6.7" height="6.4" fill="#8a8a8a"/><rect x="1" y="1.4" width="4.7" height="2.2" fill="#9c9c9c"/></svg>
<svg class="a" style="left:61.80px;top:56.20px" width="8" height="7.6" viewBox="0 0 8 7.6"><rect x="0" y="0.6" width="5.2" height="5" fill="#9fb2cc"/><rect x="1.5" y="2" width="5.2" height="5" fill="#c4d2e4"/></svg>
<svg class="a" style="left:71.10px;top:56.20px" width="8" height="7.6" viewBox="0 0 8 7.6"><rect x="1.5" y="0.4" width="4.3" height="3" fill="#f2ecd8"/><path d="M0 3.2h7.3v3.8H0z" fill="#9fb4d6"/><path d="M0 3.2h7.3v1H0z" fill="#c8d8ee"/></svg>
<svg class="a" style="left:85.50px;top:56.20px" width="8" height="7.6" viewBox="0 0 8 7.6"><ellipse cx="2.6" cy="3" rx="2.6" ry="2.2" fill="#9aa8b8"/><circle cx="4.6" cy="3" r="2.4" fill="#4aa85a"/><path d="M5.6 2.2a1.2 1.2 0 1 0 0 1.6" stroke="#dff5df" stroke-width="0.7" fill="none"/><path d="M2 5v2" stroke="#888" stroke-width="0.6"/></svg>
<svg class="a" style="left:94.70px;top:56.20px" width="8" height="7.6" viewBox="0 0 8 7.6"><path d="M0 6.6Q5 6 7.6 0.4L6.8 0.6Q3.5 4.6 0.2 5.6z" fill="#f0d250"/><path d="M2.5 5.6L7.2 0.6" stroke="#a08a40" stroke-width="0.5"/></svg>
<svg class="a" style="left:105.30px;top:56.20px" width="8" height="7.6" viewBox="0 0 8 7.6"><rect x="0.3" y="0.5" width="6" height="6.6" fill="#3f5f9a" stroke="#e8eef6" stroke-width="0.9"/><path d="M3.4 2v3" stroke="#9cc0f0" stroke-width="0.8"/></svg>
<svg class="a" style="left:115.20px;top:56.20px" width="8" height="7.6" viewBox="0 0 8 7.6"><rect x="0.3" y="0.5" width="6" height="6.6" fill="#4a76b8" stroke="#f0f4f8" stroke-width="0.9"/><path d="M2.5 2.2h2M2.5 3.4h2M2.5 4.6h2" stroke="#c0d8f4" stroke-width="0.5"/></svg>
<svg class="a" style="left:129.40px;top:56.20px" width="8" height="7.6" viewBox="0 0 8 7.6"><circle cx="2.8" cy="3.6" r="2.8" fill="#8aa2c8"/><circle cx="2.8" cy="3.6" r="1.7" fill="#b4c6e2"/><circle cx="2.8" cy="3.6" r="0.8" fill="#5a76a8"/></svg>
<svg class="a" style="left:143.40px;top:56.20px" width="8" height="7.6" viewBox="0 0 8 7.6"><path d="M0.5 0.6L5.6 3.6L3.6 4.4L5 6.6L4 7L2.8 5L1.2 6.2z" fill="#5fb08a"/></svg>
<div class="a" style="left:151.3px;top:59.4px;width:0;height:0;border-left:1.2px solid transparent;border-right:1.2px solid transparent;border-top:1.6px solid #050505"></div>
<svg class="a" style="left:155.80px;top:56.20px" width="8" height="7.6" viewBox="0 0 8 7.6"><circle cx="3.6" cy="3.8" r="3.6" fill="url(#gR)"/><path d="M2.8 2.2L5 3.8L2.8 5.4z" fill="#f0fff0"/></svg>
<div class="a" style="left:164.5px;top:59.4px;width:0;height:0;border-left:1.2px solid transparent;border-right:1.2px solid transparent;border-top:1.6px solid #050505"></div>
<svg class="a" style="left:169.50px;top:56.20px" width="8.5" height="7.6" viewBox="0 0 8.5 7.6"><circle cx="3" cy="3" r="2.9" fill="url(#gR)"/><path d="M2.3 1.7L4 3L2.3 4.3z" fill="#f0fff0"/><path d="M3.6 5.2h4.5v2.4H3.6z" fill="#c8403a"/><path d="M4.6 4.4h2.4v1H4.6z" fill="#e06050"/></svg>
<div class="a" style="left:178.20000000000002px;top:59.4px;width:0;height:0;border-left:1.2px solid transparent;border-right:1.2px solid transparent;border-top:1.6px solid #050505"></div>
<svg class="a" style="left:187.80px;top:56.20px" width="8" height="7.6" viewBox="0 0 8 7.6"><rect x="0" y="0.8" width="6.4" height="6" fill="#e4b888"/><path d="M0 3.8h6.4M3.2 0.8v6" stroke="#a07040" stroke-width="0.6"/><path d="M5 0.6l1.4 1.4" stroke="#f8e0a0" stroke-width="0.8"/></svg>
<svg class="a" style="left:197.20px;top:56.20px" width="8" height="7.6" viewBox="0 0 8 7.6"><circle cx="3.4" cy="3.9" r="3.4" fill="url(#gR)"/><path d="M4.6 2.6a1.6 1.6 0 1 0 0 2.6" stroke="#e8f8e8" stroke-width="0.9" fill="none"/><circle cx="6.2" cy="1" r="0.9" fill="#f0d060"/></svg>
<div class="a" style="left:205.9px;top:59.4px;width:0;height:0;border-left:1.2px solid transparent;border-right:1.2px solid transparent;border-top:1.6px solid #050505"></div>
<svg class="a" style="left:214.70px;top:56.20px" width="8" height="7.6" viewBox="0 0 8 7.6"><path d="M0 3.4h7.4v3.8H0z" fill="#e8b850"/><circle cx="3.9" cy="2.6" r="2.4" fill="#5aa0c8"/><path d="M2.2 1.6a2.4 2.4 0 0 1 3.6 0v1.2h-3.6z" fill="#62b060"/><path d="M0 4.6h7.4v2.6H0z" fill="#f2cc6a"/></svg>
<svg class="a" style="left:224.10px;top:56.20px" width="8" height="7.6" viewBox="0 0 8 7.6"><path d="M0.4 6.8L1.6 4.4L6.6 0.4L7.8 1.6L3.8 6.2z" fill="#ece0c8"/><path d="M0.4 6.8L1.6 4.4L2.8 5.6z" fill="#b89060"/></svg>
<div class="a" style="left:233.1px;top:59.4px;width:0;height:0;border-left:1.2px solid transparent;border-right:1.2px solid transparent;border-top:1.6px solid #050505"></div>
<svg class="a" style="left:242.20px;top:56.20px" width="8" height="7.6" viewBox="0 0 8 7.6"><rect x="1" y="1.2" width="5" height="6.2" fill="#dce6f0"/><path d="M1.6 2.6h3.6M1.6 3.8h3.6M1.6 5h3.6" stroke="#8aa0bc" stroke-width="0.4"/><path d="M0 0.2h2.4v2.4H0z" fill="#f0c850"/></svg>
<div class="a" style="left:250.5px;top:59.4px;width:0;height:0;border-left:1.2px solid transparent;border-right:1.2px solid transparent;border-top:1.6px solid #050505"></div>
<svg class="a" style="left:255.70px;top:56.20px" width="8" height="7.6" viewBox="0 0 8 7.6"><rect x="1.6" y="0.6" width="5" height="6.6" fill="#e4e8e0"/><path d="M2.4 2h3.4M2.4 3.2h3.4M2.4 4.4h3.4" stroke="#9aa8b0" stroke-width="0.4"/><path d="M0.2 2.6h2.4v4.8H0.2z" fill="#f0c040"/></svg>
<div class="a" style="left:264.59999999999997px;top:59.4px;width:0;height:0;border-left:1.2px solid transparent;border-right:1.2px solid transparent;border-top:1.6px solid #050505"></div>
<svg class="a" style="left:269.00px;top:56.20px" width="8" height="7.6" viewBox="0 0 8 7.6"><path d="M0 3.6L3.4 0.6V2.4H7.4V4.8H3.4V6.6z" fill="#f2c838"/><path d="M5 2.4h2.4v2.4H5z" fill="#f8f0d0"/></svg>
<svg class="a" style="left:279.10px;top:56.20px" width="8" height="7.6" viewBox="0 0 8 7.6"><rect x="0" y="2" width="5.6" height="5" fill="#8c8c8c"/><path d="M3.2 3.2L6.6 0.4" stroke="#a8a8a8" stroke-width="0.9"/></svg>
<svg class="a" style="left:289.20px;top:56.20px" width="8" height="7.6" viewBox="0 0 8 7.6"><path d="M0 3.6L3.4 0.6V2.4H7.4V4.8H3.4V6.6z" fill="#f2c838"/></svg>
<div class="a" style="left:298.2px;top:59.4px;width:0;height:0;border-left:1.2px solid transparent;border-right:1.2px solid transparent;border-top:1.6px solid #050505"></div>
<svg class="a" style="left:302.60px;top:56.20px" width="8" height="7.6" viewBox="0 0 8 7.6"><path d="M7 3.6L3.6 0.6V2.4H0V4.8H3.6V6.6z" fill="#7a7a7a"/></svg>
<div class="a" style="left:311.09999999999997px;top:59.4px;width:0;height:0;border-left:1.2px solid transparent;border-right:1.2px solid transparent;border-top:1.6px solid #050505"></div>
<div class="a" style="left:686.40px;top:55.30px;width:57.5px;height:8.7px;background:linear-gradient(#ffffff,#f0f0f0);border-radius:4.4px"></div>
<div class="a" style="left:689px;top:57px;width:4px;height:4px;border:1px solid #444;border-radius:50%"></div>
<div class="a" style="left:692.30px;top:60.80px;width:2px;height:0.9px;background:#444;transform:rotate(45deg)"></div>
<div class="t" style="left:695.20px;top:57.15px;font-size:6.1px;color:#7a7a7a;-webkit-text-stroke:0transform:scaleX(0.9186);transform-origin:0 0;">Quick Access</div>
<div class="a" style="left:748.30px;top:53.00px;width:0.6px;height:13px;background:#333"></div>
<svg class="a" style="left:752.70px;top:56.20px" width="8" height="7.6" viewBox="0 0 8 7.6"><rect x="0.4" y="1.6" width="5.8" height="5.6" fill="#d8e4f0"/><path d="M0.4 1.6h5.8v1.4H0.4z" fill="#8fb0d8"/><path d="M4.6 0.2l0.5 1.3 1.3 0.3-1 0.9 0.3 1.3-1.1-0.7-1.1 0.7 0.3-1.3-1-0.9 1.3-0.3z" fill="#f4d040"/></svg>
<svg class="a" style="left:763.70px;top:56.20px" width="8" height="7.6" viewBox="0 0 8 7.6"><rect x="0.4" y="3.4" width="3.6" height="3.8" fill="#5aa860"/><path d="M1 3.4l1.8-2.4 1.6 2.4z" fill="#f0c040"/><path d="M4 7.2l1.8-5.6 1.4 0.6-1.4 5z" fill="#8a7ad0"/><circle cx="5.6" cy="1.2" r="1" fill="#6a9ad8"/></svg>
<div class="t" style="left:772.20px;top:57.60px;font-size:5.6px;color:#5c5c5c;-webkit-text-stroke:0transform:scaleX(0.8370);transform-origin:0 0;">Java</div>
<svg class="a" style="left:169.10px;top:72.10px" width="6.5" height="6" viewBox="0 0 6.5 6"><rect x="0.3" y="0.3" width="5.6" height="5.4" fill="#c6d8ea" rx="0.4"/><rect x="0.9" y="0.8" width="4.6" height="1" fill="#e4eef8"/><path d="M1.2 3h3.8" stroke="#5f7fa8" stroke-width="0.9"/></svg>
<svg class="a" style="left:178.00px;top:71.40px" width="7.5" height="7.4" viewBox="0 0 7.5 7.4"><path d="M0.2 2.1L2.4 0.2V1.4H5.6V2.8H2.4V4z" fill="#e8c050"/><path d="M7.2 5.2L5 3.2V4.4H1.8V5.8H5V7z" fill="#c89a30"/></svg>
<div class="a" style="left:192.2px;top:71.6px;width:0;height:0;border-left:2.3px solid transparent;border-right:2.3px solid transparent;border-top:2px solid #8a8a8a"></div>
<div class="a" style="left:200.90px;top:73.40px;width:4.3px;height:1.2px;background:#b0b0b0"></div>
<div class="a" style="left:211.10px;top:73.10px;width:4px;height:3.8px;background:#ececec"></div>
<div class="a" style="left:625.00px;top:73.10px;width:4.2px;height:1.2px;background:#b8b8b8"></div>
<div class="a" style="left:634.70px;top:72.60px;width:4px;height:3.8px;background:#ececec"></div>
<div class="a" style="left:757.9000000000001px;top:71.6px;width:0;height:0;border-left:2.3px solid transparent;border-right:2.3px solid transparent;border-top:2px solid #8a8a8a"></div>
<div class="a" style="left:768.00px;top:73.40px;width:4.3px;height:1.2px;background:#b0b0b0"></div>
<div class="a" style="left:777.20px;top:73.10px;width:4px;height:3.8px;background:#ececec"></div>
<div class="a" style="left:757.9000000000001px;top:405.8px;width:0;height:0;border-left:2.3px solid transparent;border-right:2.3px solid transparent;border-top:2px solid #8a8a8a"></div>
<div class="a" style="left:768.30px;top:407.60px;width:4.3px;height:1.2px;background:#b0b0b0"></div>
<div class="a" style="left:779.30px;top:407.30px;width:4px;height:3.8px;background:#ececec"></div>
<svg class="a" style="left:695.90px;top:72.10px" width="6.5" height="6.4" viewBox="0 0 6.5 6.4"><rect x="0.3" y="0.3" width="5.6" height="5.4" fill="#c6d8ea" rx="0.4"/><rect x="0.9" y="0.8" width="4.6" height="1" fill="#e4eef8"/><path d="M1.2 3h3.8" stroke="#5f7fa8" stroke-width="0.9"/></svg>
<svg class="a" style="left:705.30px;top:71.50px" width="7.6" height="7" viewBox="0 0 7.6 7"><rect x="1.4" y="0.2" width="3" height="3" fill="#3c9a6a"/><path d="M1 1.6v4.2h2.6" stroke="#8a8a8a" stroke-width="0.5" fill="none"/><circle cx="5.2" cy="5.2" r="1.7" fill="#a060b8"/></svg>
<svg class="a" style="left:715.80px;top:72.10px" width="6.4" height="6.4" viewBox="0 0 6.4 6.4"><circle cx="3" cy="3.2" r="2.9" fill="#4f8fd8"/><path d="M1.4 3.2h3.4M3 1.6v3.4" stroke="#e4f0ff" stroke-width="0.8"/></svg>
<svg class="a" style="left:726.00px;top:71.70px" width="6.2" height="6.6" viewBox="0 0 6.2 6.6"><circle cx="2.4" cy="4.2" r="2.2" fill="#8a9ac0"/><path d="M3.6 2.8L5.6 0.6" stroke="#a8b8d8" stroke-width="0.7"/><circle cx="5.2" cy="1.2" r="0.8" fill="#b8c4e0"/></svg>
<div class="a" style="left:736.20px;top:72.70px;width:4.2px;height:4.2px;background:#58b860;border-radius:50%"></div>
<svg class="a" style="left:745.90px;top:71.70px" width="6.2" height="6.6" viewBox="0 0 6.2 6.6"><circle cx="2.4" cy="4.2" r="2.2" fill="#8a9ac0"/><path d="M3.6 2.8L5.6 0.6" stroke="#a8b8d8" stroke-width="0.7"/><circle cx="5.2" cy="1.2" r="0.8" fill="#b8c4e0"/></svg>
<svg class="a" style="left:650.00px;top:71.60px" width="7" height="7" viewBox="0 0 7 7"><rect x="0.2" y="0.4" width="2.6" height="2.4" fill="#5a9ee6"/><rect x="0.2" y="4" width="2.6" height="2.4" fill="#5a9ee6"/><path d="M3.4 1.6h3.2M3.4 5.2h3.2" stroke="#9aa4b0" stroke-width="0.8"/></svg>
<svg class="a" style="left:37.50px;top:71.30px" width="4.8" height="8" viewBox="0 0 4.8 8"><rect x="0.2" y="0.4" width="4.2" height="7.2" fill="#c07a38"/><path d="M0.2 2.8h4.2M0.2 5.2h4.2M2.3 0.4v7.2" stroke="#4e3214" stroke-width="0.6"/></svg>
<svg class="a" style="left:226.60px;top:71.90px" width="5.5" height="7.6" viewBox="0 0 5.5 7.6"><path d="M0.3 0.4h3.6l1.2 1.2v5.6H0.3z" fill="#e4ecf4" stroke="#9fb2c6" stroke-width="0.4"/><path d="M2.8 2.2v2.8q0 1.1-1.3 1" stroke="#3a6cc0" stroke-width="0.9" fill="none"/></svg>
<svg class="a" style="left:287.00px;top:71.90px" width="5.5" height="7.6" viewBox="0 0 5.5 7.6"><path d="M0.3 0.4h3.6l1.2 1.2v5.6H0.3z" fill="#e4ecf4" stroke="#9fb2c6" stroke-width="0.4"/><path d="M2.8 2.2v2.8q0 1.1-1.3 1" stroke="#3a6cc0" stroke-width="0.9" fill="none"/></svg>
<svg class="a" style="left:371.70px;top:71.90px" width="5.5" height="7.6" viewBox="0 0 5.5 7.6"><path d="M0.3 0.4h3.6l1.2 1.2v5.6H0.3z" fill="#e4ecf4" stroke="#9fb2c6" stroke-width="0.4"/><path d="M2.8 2.2v2.8q0 1.1-1.3 1" stroke="#3a6cc0" stroke-width="0.9" fill="none"/></svg>
<svg class="a" style="left:225.70px;top:405.60px" width="6.4" height="7.2" viewBox="0 0 6.4 7.2"><rect x="0.4" y="0.2" width="5.6" height="6.6" fill="#eef0f4"/><circle cx="2.8" cy="1.8" r="1.1" fill="#c84848"/><path d="M0 6.8L1.6 3.6L3.2 6.8z" fill="#f0c850"/></svg>
<svg class="a" style="left:272.80px;top:406.20px" width="5.2" height="6.4" viewBox="0 0 5.2 6.4"><rect x="0.3" y="0.6" width="4.4" height="5.4" rx="1.2" fill="#5a8ed8"/><circle cx="2.5" cy="3.3" r="1.1" fill="#d8e8ff"/></svg>
<svg class="a" style="left:305.20px;top:405.60px" width="6.4" height="7.2" viewBox="0 0 6.4 7.2"><rect x="0.4" y="0.2" width="4.6" height="6.4" fill="#f4eedc"/><path d="M1 1.6h3M1 2.8h3" stroke="#9a9070" stroke-width="0.4"/><path d="M2.4 4h3.6v2.8H2.4z" fill="#e0b850"/></svg>
<svg class="a" style="left:349.00px;top:406.00px" width="5.8" height="6" viewBox="0 0 5.8 6"><rect x="0.2" y="0.4" width="5.4" height="5" fill="#4a7ec8"/><rect x="0.9" y="1.5" width="4" height="3.2" fill="#c8dcf4"/></svg></div></body></html>
